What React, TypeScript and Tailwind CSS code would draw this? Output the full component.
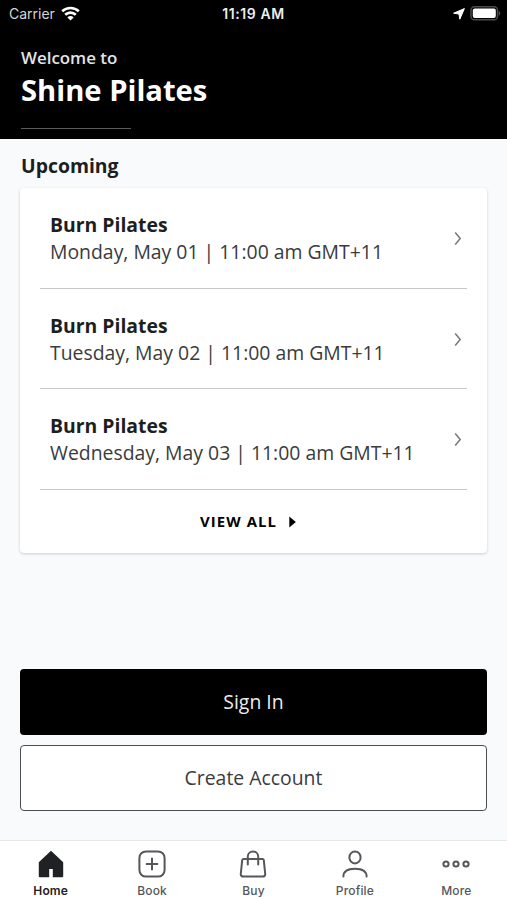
const classes = [
  { name: "Burn Pilates", time: "Monday, May 01 | 11:00 am GMT+11" },
  { name: "Burn Pilates", time: "Tuesday, May 02 | 11:00 am GMT+11" },
  { name: "Burn Pilates", time: "Wednesday, May 03 | 11:00 am GMT+11" },
];

function HomeIcon() {
  return (
    <svg width="28" height="28" viewBox="0 0 28 28" fill="currentColor">
      <path d="M14 0.8 26.2 12.2V26.2a1 1 0 0 1-1 1H15.8V19h-3.6v8.2H2.8a1 1 0 0 1-1-1V12.2Z" />
    </svg>
  );
}

function BookIcon() {
  return (
    <svg width="28" height="28" viewBox="0 0 28 28" fill="none" stroke="currentColor" strokeWidth="2" strokeLinecap="round">
      <rect x="1.4" y="1.4" width="25.2" height="25.2" rx="6.5" />
      <path d="M14 8.6v10.8M8.6 14h10.8" />
    </svg>
  );
}

function BuyIcon() {
  return (
    <svg width="28" height="28" viewBox="0 0 28 28" fill="none" stroke="currentColor" strokeWidth="2" strokeLinecap="round" strokeLinejoin="round">
      <path d="M4.6 9h18.8a1.4 1.4 0 0 1 1.4 1.2L26.2 23.8a2.4 2.4 0 0 1-2.4 2.8H4.2a2.4 2.4 0 0 1-2.4-2.8L3.2 10.2A1.4 1.4 0 0 1 4.6 9Z" />
      <path d="M8.8 14.5V6.4a5.2 5 0 0 1 10.4 0v8.1" />
    </svg>
  );
}

function ProfileIcon() {
  return (
    <svg width="28" height="28" viewBox="0 0 28 28" fill="none" stroke="currentColor" strokeWidth="2" strokeLinecap="round">
      <ellipse cx="14" cy="7.4" rx="5.6" ry="6" />
      <path d="M2.4 26.6c0-5.2 4.6-7.8 11.6-7.8s11.6 2.6 11.6 7.8" />
    </svg>
  );
}

function MoreIcon() {
  return (
    <svg width="28" height="28" viewBox="0 0 28 28" fill="none" stroke="currentColor" strokeWidth="2">
      <circle cx="4" cy="14" r="2.6" />
      <circle cx="14" cy="14" r="2.6" />
      <circle cx="24" cy="14" r="2.6" />
    </svg>
  );
}

const tabs = [
  { label: "Home", icon: <HomeIcon />, active: true },
  { label: "Book", icon: <BookIcon /> },
  { label: "Buy", icon: <BuyIcon /> },
  { label: "Profile", icon: <ProfileIcon /> },
  { label: "More", icon: <MoreIcon /> },
];

function StatusBar() {
  return (
    <div className="grid h-[27px] grid-cols-3 items-center pr-[6px] pl-[9px] font-['Inter',sans-serif] text-[14px]">
      <div className="flex items-center gap-[6px] text-[#d6d6d6]">
        <span>Carrier</span>
        <svg width="19" height="15" viewBox="0 0 19 15" fill="none" stroke="#fff" strokeWidth="2.6">
          <path d="M1.2 5.3a12 12 0 0 1 16.6 0" />
          <path d="M4.2 8.8a7.6 7.6 0 0 1 10.6 0" />
          <path d="M9.5 14.4 6.4 11.4a4.4 4.4 0 0 1 6.2 0Z" fill="#fff" stroke="none" />
        </svg>
      </div>
      <span className="-ml-[3px] text-center font-semibold tracking-[0.6px] text-[#ececec]">11:19 AM</span>
      <div className="flex items-center justify-end gap-[5px]">
        <svg width="12" height="12" viewBox="0 0 12 12" fill="#fff" stroke="#fff" strokeWidth="1" strokeLinejoin="round">
          <path d="M11.4 0.6 6.8 11.2 6 6 0.6 5.2Z" />
        </svg>
        <svg width="31" height="15" viewBox="0 0 31 15">
          <rect x="1" y="0.8" width="26.5" height="13" rx="3.6" fill="none" stroke="#4a4a4a" strokeWidth="1.5" />
          <rect x="2.8" y="2.6" width="23" height="9.4" rx="2" fill="#fff" />
          <path d="M28.6 5v4.6c1-.4 1.8-1.2 1.8-2.3S29.6 5.4 28.6 5Z" fill="#4a4a4a" />
        </svg>
      </div>
    </div>
  );
}

function ClassRow({ name, time }: { name: string; time: string }) {
  return (
    <div className="flex h-[100.7px] items-center justify-between border-b border-[#c8c8c8] pr-[5px] pl-[10px]">
      <div className="leading-[27px]">
        <p className="text-[19.4px] font-bold text-[#1d1e20]">{name}</p>
        <p className="text-[19.4px] text-[#3a3b3d]">{time}</p>
      </div>
      <svg width="8" height="14" viewBox="0 0 8 14" fill="none" stroke="#777" strokeWidth="1.5">
        <path d="m1.2 1.5 5 6-5 6" />
      </svg>
    </div>
  );
}

export default function App() {
  return (
    <div className="flex h-[900px] w-[507px] flex-col overflow-hidden bg-[#f8fafc] font-['Open_Sans',sans-serif]">
      <header className="h-[139px] bg-black text-white">
        <StatusBar />
        <div className="px-[21px] pt-[19px]">
          <p className="text-[16.9px] leading-[24px] font-semibold text-[#e4e4e4]">Welcome to</p>
          <h1 className="text-[29.2px] leading-[40px] font-bold">Shine Pilates</h1>
          <div className="mt-[18px] h-px w-[110px] bg-[#5c5c5c]" />
        </div>
      </header>

      <main className="flex flex-1 flex-col px-5">
        <h2 className="mt-[13px] pl-px text-[19.4px] leading-[27px] font-bold text-[#1d1e20]">Upcoming</h2>
        <section className="mt-[9px] h-[365px] rounded bg-white px-5 shadow-[0_1px_3px_rgba(0,0,0,0.18)]">
          {classes.map((item) => (
            <ClassRow key={item.time} {...item} />
          ))}
          <button className="flex h-[63px] w-full items-center justify-center gap-3 pr-[11px] text-[14.9px] font-bold tracking-[1.1px] text-black">
            VIEW ALL
            <svg width="7" height="12" viewBox="0 0 7 12" fill="currentColor">
              <path d="M0.3 0.5 6.8 6 0.3 11.5Z" />
            </svg>
          </button>
        </section>

        <div className="mt-[116px] flex flex-col gap-[10px]">
          <button className="h-[66px] rounded bg-black text-[19.4px] text-[#ececec]">Sign In</button>
          <button className="h-[66px] rounded border border-[#4c4d50] bg-white text-[19.4px] text-[#3a3b3d]">
            Create Account
          </button>
        </div>
      </main>

      <nav className="grid h-[60px] grid-cols-5 border-t border-[#e6e8ea] bg-white font-['Inter',sans-serif] text-[12px]">
        {tabs.map((tab) => (
          <div
            key={tab.label}
            className={`flex flex-col items-center pt-[9px] ${tab.active ? "font-semibold text-[#1f2124]" : "font-medium text-[#55575b]"}`}
          >
            {tab.icon}
            <span className="mt-[5px] leading-4 tracking-[0.15px]">{tab.label}</span>
          </div>
        ))}
      </nav>
    </div>
  );
}
